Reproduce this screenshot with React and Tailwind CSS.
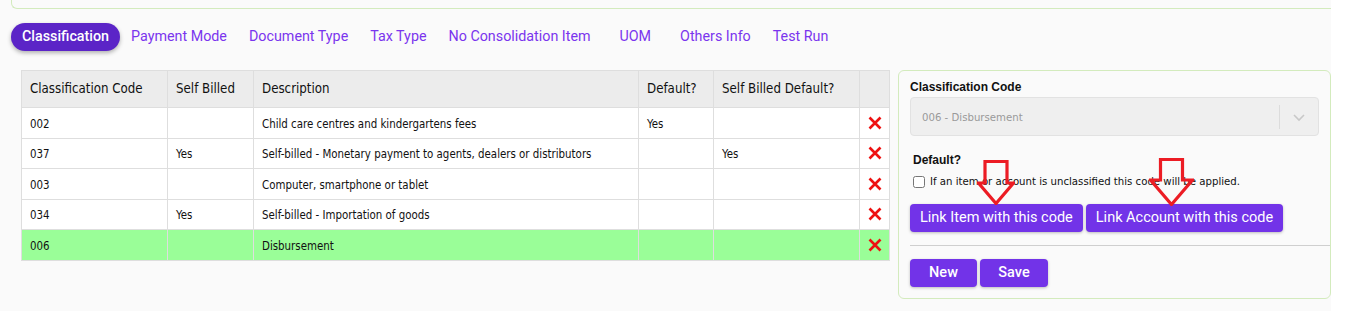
import React, { useState } from "react";

const tabs = [
  "Classification",
  "Payment Mode",
  "Document Type",
  "Tax Type",
  "No Consolidation Item",
  "UOM",
  "Others Info",
  "Test Run",
];

const rows = [
  { code: "002", selfBilled: "", desc: "Child care centres and kindergartens fees", def: "Yes", sbDef: "" },
  { code: "037", selfBilled: "Yes", desc: "Self-billed - Monetary payment to agents, dealers or distributors", def: "", sbDef: "Yes" },
  { code: "003", selfBilled: "", desc: "Computer, smartphone or tablet", def: "", sbDef: "" },
  { code: "034", selfBilled: "Yes", desc: "Self-billed - Importation of goods", def: "", sbDef: "" },
  { code: "006", selfBilled: "", desc: "Disbursement", def: "", sbDef: "" },
];

const tahomaish = { fontFamily: "'DejaVu Sans Condensed', 'Liberation Sans', sans-serif" };

const RedX = () => (
  <svg width="14" height="14" viewBox="0 0 14 14" className="mx-auto">
    <path d="M1.5 1.5 L12.5 12.5 M12.5 1.5 L1.5 12.5" stroke="#ee1111" strokeWidth="2.6" />
  </svg>
);

// hollow red arrow pointing down
const DownArrow = ({ w, shaftW, shaftH, h }) => {
  const cx = w / 2;
  const sl = cx - shaftW / 2;
  const sr = cx + shaftW / 2;
  const d = `M${sl} 1.5 L${sr} 1.5 L${sr} ${shaftH} L${w - 1.5} ${shaftH} L${cx} ${h - 1.5} L1.5 ${shaftH} L${sl} ${shaftH} Z`;
  return (
    <svg width={w} height={h} viewBox={`0 0 ${w} ${h}`}>
      <path d={d} fill="none" stroke="#ec1c24" strokeWidth="3.2" strokeLinejoin="miter" />
    </svg>
  );
};

const App = () => {
  const [active] = useState(0);
  const [selected] = useState(4);

  const th = "border border-[#dedede] px-2 text-left font-normal text-[13.2px] text-[#111]";
  const td = "border border-[#dedede] px-2 pt-[3px] text-[11.4px] text-[#111]";
  const btn = "h-[28px] bg-[#7233e8] text-white text-[14.5px] rounded-[4px] shadow-[0_1px_3px_rgba(0,0,0,0.25)]";

  return (
    <div className="w-[1331px] h-[311px] overflow-hidden bg-[#fafafa] relative" style={{ fontFamily: "Roboto, sans-serif" }}>
      {/* top card bottom edge */}
      <div className="ml-[11px] w-[1340px] h-[9px] border-l border-b border-[#d3ebbd] rounded-bl-md bg-[#fafafa]" />

      {/* TABS */}
      <div className="flex items-center ml-[11px] mt-[14px] h-[28px]">
        {tabs.map((t, i) =>
          i === active ? (
            <div
              key={t}
              className="h-[28px] px-[11px] flex items-center rounded-full bg-[#5b24c7] text-white text-[14.3px] font-medium shadow-[0_2px_4px_rgba(0,0,0,0.3)]"
            >
              {t}
            </div>
          ) : (
            <div
              key={t}
              className={`h-[28px] flex items-center text-[14.3px] text-[#7a35ee] ${t === "UOM" ? "px-[18px]" : "px-[11px]"}`}
            >
              {t}
            </div>
          )
        )}
      </div>

      <div className="flex mt-[19px]">
        {/* TABLE */}
        <div className="ml-[21px]" style={tahomaish}>
          <table className="border-collapse w-[868px] table-fixed">
            <colgroup>
              <col className="w-[146px]" />
              <col className="w-[86px]" />
              <col className="w-[385px]" />
              <col className="w-[75px]" />
              <col className="w-[146px]" />
              <col className="w-[30px]" />
            </colgroup>
            <thead>
              <tr className="h-[37px] bg-[#ececec]">
                <th className={th}>Classification Code</th>
                <th className={th}>Self Billed</th>
                <th className={th}>Description</th>
                <th className={th}>Default?</th>
                <th className={th}>Self Billed Default?</th>
                <th className={th}></th>
              </tr>
            </thead>
            <tbody>
              {rows.map((r, i) => (
                <tr key={r.code} className={`h-[30.5px] ${i === selected ? "bg-[#9afe98]" : "bg-white"}`}>
                  <td className={td}>{r.code}</td>
                  <td className={td}>{r.selfBilled}</td>
                  <td className={td}>{r.desc}</td>
                  <td className={td}>{r.def}</td>
                  <td className={td}>{r.sbDef}</td>
                  <td className="border border-[#dedede] p-0">
                    <RedX />
                  </td>
                </tr>
              ))}
            </tbody>
          </table>
        </div>

        {/* RIGHT PANEL */}
        <div className="ml-[8px] w-[436px] h-[229px] border border-[#d3ebbd] rounded-md bg-[#fafafa] px-[11px] pt-[8px]">
          <div className="text-[12px] leading-[16px] font-bold text-[#111]" style={{ fontFamily: "'Liberation Sans', sans-serif" }}>
            Classification Code
          </div>
          <div className="mt-[2px] h-[39px] flex items-center bg-[#efefef] border border-[#e2e2e2] rounded-[4px]">
            <span className="flex-1 pl-[11px] pt-[3px] text-[11.3px] text-[#9a9a9a]" style={tahomaish}>
              006 - Disbursement
            </span>
            <div className="w-px h-[24px] bg-[#dcdcdc]" />
            <div className="w-[38px] flex justify-center">
              <svg width="14" height="10" viewBox="0 0 14 10">
                <path d="M2 3 L7 8 L12 3" fill="none" stroke="#c8c8c8" strokeWidth="1.6" />
              </svg>
            </div>
          </div>

          <div className="mt-[16px] ml-[3px] text-[12px] leading-[16px] font-bold text-[#111]" style={{ fontFamily: "'Liberation Sans', sans-serif" }}>
            Default?
          </div>
          <label className="flex items-center ml-[3px] mt-[6px] text-[11.3px] text-[#111]" style={tahomaish}>
            <input type="checkbox" className="w-[12px] h-[12px] mr-[5px]" />
            If an item or account is unclassified this code will be applied.
          </label>

          <div className="flex gap-[3px] mt-[13px]">
            <button className={`${btn} px-[10px]`}>Link Item with this code</button>
            <button className={`${btn} px-[10px]`}>Link Account with this code</button>
          </div>

          <div className="mt-[13px] -mr-[11px] border-t border-[#cfcfcf]" />

          <div className="flex gap-[3px] mt-[13px]">
            <button className={`${btn} w-[67px] font-medium`}>New</button>
            <button className={`${btn} w-[68px] font-medium`}>Save</button>
          </div>
        </div>
      </div>

      {/* annotation arrows */}
      <div className="absolute left-[977px] top-[160px]">
        <DownArrow w={38} shaftW={22} shaftH={23} h={45} />
      </div>
      <div className="absolute left-[1149px] top-[158px]">
        <DownArrow w={45} shaftW={22} shaftH={22} h={48} />
      </div>
    </div>
  );
};

export default App;
